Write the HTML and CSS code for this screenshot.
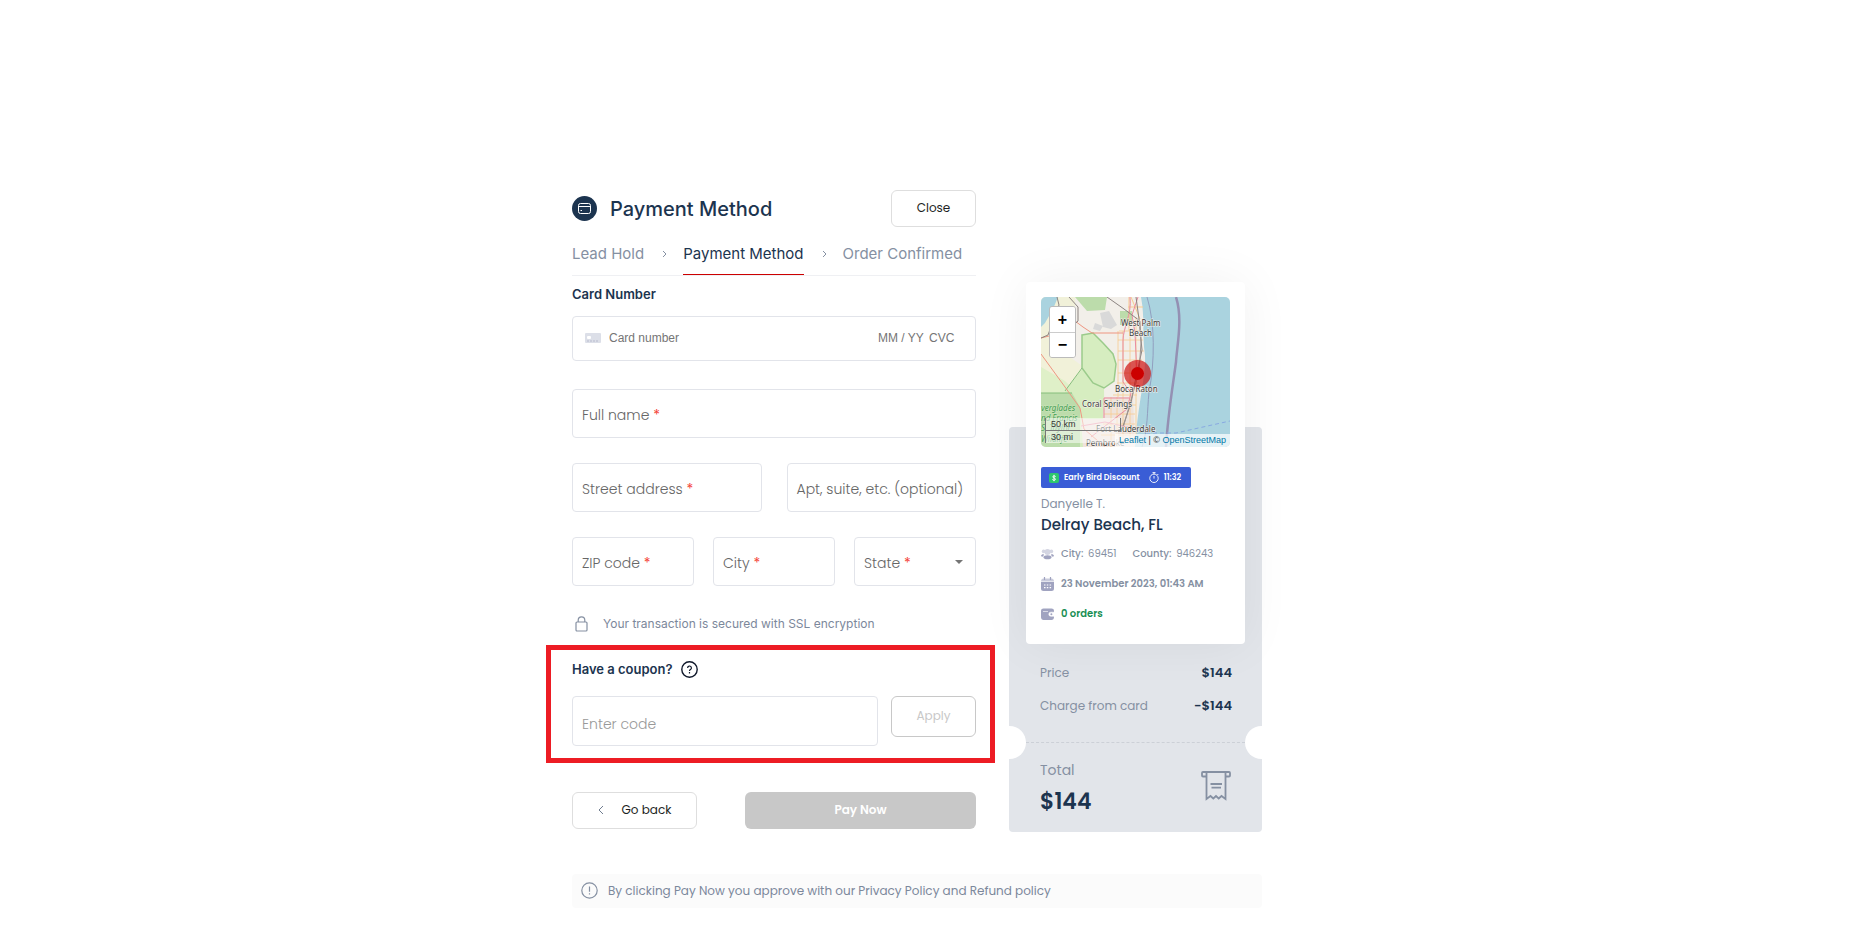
FILE: index.html
```html
<!DOCTYPE html>
<html lang="en">
<head>
  <meta charset="UTF-8">
  <meta name="viewport" content="width=device-width, initial-scale=1.0">
  <title>Payment Method</title>
  <link rel="stylesheet" href="styles.css">
</head>
<body>

<main class="checkout">
  <div class="columns">
    <form class="payment">
      <header class="payment-header">
        <svg class="title-icon" viewBox="0 0 25 25" fill="none">
          <circle cx="12.5" cy="12.5" r="12.5" fill="#1c344f"/>
          <rect x="6.5" y="7.5" width="12" height="10" rx="2" stroke="#fff"/>
          <path d="M6.5 10.5h12M8.5 14.5h1.5" stroke="#fff"/>
        </svg>
        <h1>Payment Method</h1>
        <button type="button" class="btn close-btn">Close</button>
      </header>

      <nav class="steps">
        <a href="#" class="step">Lead Hold</a>
        <svg class="step-arrow" viewBox="0 0 5 8"><path d="M1 1l3 3-3 3"/></svg>
        <a href="#" class="step active">Payment Method</a>
        <svg class="step-arrow" viewBox="0 0 5 8"><path d="M1 1l3 3-3 3"/></svg>
        <a href="#" class="step">Order Confirmed</a>
      </nav>

      <label class="section-label" for="cardNumber">Card Number</label>
      <div class="card-box">
        <svg class="card-icon" viewBox="0 0 16 10">
          <rect width="16" height="10" rx="1" fill="#dcdfe8"/>
          <rect x="2" y="3" width="4" height="3" rx="1" fill="#fff"/>
          <path d="M2 8h12" stroke="#c3c8d6" stroke-width="1.5" stroke-dasharray="2 1"/>
        </svg>
        <input type="text" id="cardNumber" class="card-number" placeholder="Card number">
        <input type="text" class="card-exp" placeholder="MM / YY" aria-label="Expiry date">
        <input type="text" class="card-cvc" placeholder="CVC" aria-label="CVC">
      </div>

      <div class="fields">
        <div class="field">
          <input type="text" id="fullName">
          <label for="fullName">Full name <span class="req">*</span></label>
        </div>
      </div>
      <div class="fields two">
        <div class="field">
          <input type="text" id="street">
          <label for="street">Street address <span class="req">*</span></label>
        </div>
        <div class="field">
          <input type="text" id="apt">
          <label for="apt">Apt, suite, etc. (optional)</label>
        </div>
      </div>
      <div class="fields three">
        <div class="field">
          <input type="text" id="zip">
          <label for="zip">ZIP code <span class="req">*</span></label>
        </div>
        <div class="field">
          <input type="text" id="city">
          <label for="city">City <span class="req">*</span></label>
        </div>
        <div class="field">
          <select id="state"><option value=""></option></select>
          <label for="state">State <span class="req">*</span></label>
          <svg class="caret" viewBox="0 0 8 4"><path d="M0 0h8L4 4z" fill="#757575"/></svg>
        </div>
      </div>

      <p class="secure">
        <svg class="lock-icon" viewBox="0 0 13 16" fill="none" stroke="#8590a2" stroke-width="1.2">
          <rect x="1" y="6" width="11" height="9" rx="1"/>
          <path d="M3.2 6V4.2a3.3 3.3 0 0 1 6.6 0V6"/>
        </svg>
        Your transaction is secured with SSL encryption
      </p>

      <section class="coupon">
        <div class="coupon-title">
          <label for="coupon">Have a coupon?</label>
          <svg class="help-icon" viewBox="0 0 17 17" fill="none" stroke="#10182b">
            <circle cx="8.5" cy="8.5" r="7.7" stroke-width="1.4"/>
            <path d="M6.6 7a1.9 1.9 0 1 1 2.8 1.6c-.7.4-.9.7-.9 1.3M8.5 11.1v1.3" stroke-width="1.2"/>
          </svg>
        </div>
        <div class="coupon-row">
          <input type="text" id="coupon" placeholder="Enter code">
          <button type="button" class="btn apply-btn" disabled>Apply</button>
        </div>
      </section>

      <div class="actions">
        <button type="button" class="btn back-btn">
          <svg class="back-arrow" viewBox="0 0 6 10"><path d="M5 1L1 5l4 4"/></svg>
          Go back
        </button>
        <button type="submit" class="btn pay-btn" disabled>Pay Now</button>
      </div>
    </form>

    <aside class="summary">
      <div class="lead-card">
        <div class="map">
          <svg class="map-tiles" viewBox="0 0 189 150" preserveAspectRatio="xMidYMid slice" fill="none">
            <rect width="189" height="150" fill="#aad3df"/>
            <path d="M0 0H100C104 20 101 38 104 58C105 80 97 105 94 150H0z" fill="#f2efe9"/>
            <path d="M0 0H34V30L26 58L40 68V150H0z" fill="#f1f1d9"/>
            <path d="M0 0H17L12 12L4 26L0 30z" fill="#aad3df"/>
            <path d="M34 0H66L64 13L46 14z" fill="#bcdcab"/>
            <path d="M79 14h12v14H79z" fill="#bcdcab"/>
            <path d="M59 16l9-2 8 14-6 4-8-2zM54 26l8 3-3 5-7-2z" fill="#d9d9d9"/>
            <path d="M0 70L24 84L36 96H0z" fill="#dff0c8"/>
            <path d="M41 38L52 36L62 46L72 57L75 67L73 84L63 91L64 150H34L24 94L41 72z" fill="#d6edc0"/>
            <path d="M41 38L52 36L62 46L72 57L75 67L73 84L63 91L52 86L41 71z" stroke="#9bcb8b" stroke-width="1.5"/>
            <path d="M0 96H31L39 110V150H0z" fill="#bcdcab"/>
            <path d="M0 96H31M24 94L41 71" stroke="#85be7c"/>
            <path d="M63 100H92L94 150H42L40 122H62z" fill="#efe3dc"/>
            <path d="M82 34v112M89 34v112M95 20v120M77 34v66M78 34h23M77 43h25M77 54h26M77 63h24M77 76h24M76 86h22M72 98h24M64 108h31M63 117h31M62 127h32M60 138h34M70 100v50M76 100v50" stroke="#f7cb90" stroke-width=".8"/>
            <path d="M87 10h15M90 0l9 22M88 0v34" stroke="#f7cb90"/>
            <path d="M89 0C91 18 82 30 82 44V85L90 96L86 112L68 126L50 140M97 0L91 18L94 36L96 80M63 121V101H88" stroke="#e88ba0"/>
            <path d="M0 57L24 90L39 111L43 132L64 150M34 24L42 30L51 36H82M12 25L34 30M0 41L8 39" stroke="#ee9580"/>
            <path d="M16 0L18 8L7 38L0 41M28 0L37 10V24L27 33M66 0L83 12L99 24M95 0L98 22L101 53L94 85L90 106L81 132" stroke="#8b8380"/>
            <path d="M99 24L100 46L98 75L88 110L82 131" stroke="#9f9692"/>
            <path d="M40 129L64 125L94 132" stroke="#ec9aae"/>
            <path d="M106 0C114 25 114 65 108 95C106 115 107 133 101 150" stroke="#919ebf"/>
            <path d="M135 0C142 22 136 48 135 65C132 88 127 116 125 150" stroke="#9490b3" stroke-width="2.5"/>
            <path d="M105 136H135L189 124" stroke="#88a9e1" stroke-dasharray="4 3"/>
            <g class="park-names">
              <text x="0" y="114">verglades</text>
              <text x="0" y="124">nd Francis</text>
              <text x="0" y="134">S. Taylor</text>
              <text x="0" y="145">Wildlife</text>
            </g>
            <g class="map-names">
              <text x="80" y="29">West Palm</text>
              <text x="88" y="39">Beach</text>
              <text x="74" y="95">Boca Raton</text>
              <text x="41" y="110">Coral Springs</text>
              <text x="55" y="135">Fort Lauderdale</text>
              <text x="45" y="149">Pembroke</text>
            </g>
            <circle cx="96.5" cy="76.5" r="13.5" fill="#cc0000" fill-opacity=".65"/>
            <circle cx="96.5" cy="76.5" r="6.5" fill="#cc0000"/>
          </svg>
          <div class="zoom-control">
            <button type="button" aria-label="Zoom in">+</button>
            <button type="button" aria-label="Zoom out">−</button>
          </div>
          <div class="scale">
            <span class="scale-km">50 km</span>
            <span class="scale-mi">30 mi</span>
          </div>
          <div class="attribution"><a href="#">Leaflet</a> | © <a href="#">OpenStreetMap</a></div>
        </div>

        <div class="discount">
          <svg class="dollar-icon" viewBox="0 0 10 10" fill="none">
            <rect width="10" height="10" rx="2" fill="#2dc76d"/>
            <path d="M6.7 3.6C6 2.6 3.7 2.7 3.7 3.9S6.5 4.8 6.5 6.2 4 7.5 3.3 6.4M5 1.8v6.4" stroke="#fff" stroke-width=".9"/>
          </svg>
          <span class="discount-name">Early Bird Discount</span>
          <svg class="timer-icon" viewBox="0 0 10 11" fill="none" stroke="#fff" stroke-width=".9">
            <circle cx="5" cy="6.3" r="4.2"/>
            <path d="M3.5 .6h3M5 .6v1.5M5 4v2.6M8.3 2l1 1"/>
          </svg>
          <span>11:32</span>
        </div>

        <p class="lead-name">Danyelle T.</p>
        <h2 class="lead-place">Delray Beach, FL</h2>

        <ul class="lead-info">
          <li>
            <svg class="info-icon" viewBox="0 0 13 14" fill="#a0a3c0">
              <g opacity=".45"><circle cx="6.5" cy="5" r="3"/><circle cx="2.6" cy="4.4" r="1.8"/><circle cx="10.4" cy="4.4" r="1.8"/></g>
              <ellipse cx="6.5" cy="10.3" rx="3.9" ry="2"/>
              <path d="M0 9.2C.2 7.5 1.2 7 3 7.2L2.2 9.8zM13 9.2c-.2-1.7-1.2-2.2-3-2l.8 2.6z"/>
            </svg>
            <span><b>City:</b> 69451</span>
            <span class="county"><b>County:</b> 946243</span>
          </li>
          <li class="date">
            <svg class="info-icon" viewBox="0 0 13 14">
              <path d="M0 5h13v6.5A2.5 2.5 0 0 1 10.5 14h-8A2.5 2.5 0 0 1 0 11.5z" fill="#a0a3c0"/>
              <path d="M0 4.5C0 2.5 1 1.5 2.5 1.5h8C12 1.5 13 2.5 13 4.5z" fill="#c9cbdc"/>
              <path d="M3.5 0v3M9.5 0v3" stroke="#a0a3c0" stroke-width="1.2"/>
              <path d="M3 8h1.5M5.8 8h1.5M8.6 8h1.5M3 10.7h1.5M5.8 10.7h1.5M8.6 10.7h1.5" stroke="#fff" stroke-width="1.2"/>
            </svg>
            <span>23 November 2023, 01:43 AM</span>
          </li>
          <li class="orders">
            <svg class="info-icon" viewBox="0 0 13 14">
              <path d="M0 4C0 2.3 1 1.5 2.5 1.5h8C12 1.5 13 2.3 13 4v6c0 1.8-1 3-2.5 3h-8C1 13 0 11.8 0 10z" fill="#a0a3c0"/>
              <path d="M13 5.2H9.8a2 2 0 0 0 0 4H13zM2 4.5h5" fill="#fff" stroke="#fff" stroke-width=".6"/>
              <circle cx="10.4" cy="7.2" r="1" fill="#a0a3c0"/>
            </svg>
            <span>0 orders</span>
          </li>
        </ul>
      </div>

      <dl class="prices">
        <div class="price-row"><dt>Price</dt><dd>$144</dd></div>
        <div class="price-row"><dt>Charge from card</dt><dd>-$144</dd></div>
      </dl>

      <div class="tear">
        <span class="notch left"></span>
        <span class="dashes"></span>
        <span class="notch right"></span>
      </div>

      <div class="total">
        <div>
          <p class="total-label">Total</p>
          <p class="total-value">$144</p>
        </div>
        <svg class="receipt-icon" viewBox="0 0 30 30" fill="none" stroke="#8590a2" stroke-width="1.8">
          <path d="M5.5 1H2a1 1 0 0 0-1 1v2.500a1 1 0 0 0 1 1h3.500M24.500 1H28a1 1 0 0 1 1 1v2.500a1 1 0 0 1-1 1h-3.500M5 1h20"/>
          <path d="M5.500 1v27l4-3 2.800 2.500L15 25l2.700 2.500 2.800-2.500 4 3V1"/>
          <path d="M9.500 13h11.500M10.500 16.700h9.500"/>
        </svg>
      </div>
    </aside>
  </div>

  <footer class="notice">
    <svg class="notice-icon" viewBox="0 0 17 17" fill="none" stroke="#8590a2">
      <circle cx="8.5" cy="8.5" r="7.7" stroke-width="1.2"/>
      <path d="M8.5 4.5v5.2M8.5 11.2v1.3" stroke-width="1.2"/>
    </svg>
    By clicking Pay Now you approve with our Privacy Policy and Refund policy
  </footer>
</main>

</body>
</html>
```
FILE: styles.css
```css
/* General Styles */
* {
  box-sizing: border-box;
}
body {
  font-family: Poppins, Inter, sans-serif;
  margin: 0;
  padding: 190px 25px 20px 0;
  background: #fff;
  color: #1c344f;
}
h1, h2, p, ul, dl, dd {
  margin: 0;
  padding: 0;
}
input, select, button {
  font-family: inherit;
}
svg {
  display: block;
  flex: none;
}
a {
  text-decoration: none;
}
.checkout {
  max-width: 690px;
  margin: 0 auto;
}
.columns {
  display: flex;
  gap: 33px;
  align-items: flex-end;
}
.payment {
  flex: 1;
  min-width: 0;
  padding-bottom: 3px;
}
.btn {
  height: 37px;
  padding: 0 0 1px;
  border: 1px solid #dedede;
  border-radius: 6px;
  background: #fff;
  color: #1d1f23;
  font-size: 12px;
  cursor: pointer;
}

/* Header */
.payment-header {
  display: flex;
  align-items: center;
}
.title-icon {
  width: 25px;
  height: 25px;
}
.payment-header h1 {
  flex: 1;
  margin-left: 13px;
  font-family: Inter, sans-serif;
  font-size: 20px;
  line-height: 24px;
  font-weight: 500;
}
.close-btn {
  width: 85px;
}

/* Steps */
.steps {
  display: flex;
  align-items: center;
  height: 49px;
  border-bottom: 1px solid #eff0f3;
  font-family: Inter, sans-serif;
}
.step {
  height: 48px;
  color: #8590a2;
  font-size: 15px;
  line-height: 54px;
  white-space: nowrap;
}
.step.active {
  color: #1c344f;
  border-bottom: 1px solid #cc0000;
}
.step-arrow {
  width: 5px;
  height: 8px;
  margin: 6px 16px 0 18px;
  fill: none;
  stroke: #8590a2;
}

/* Card */
.section-label {
  display: block;
  padding: 10px 0 14px;
  font-family: Inter, sans-serif;
  font-size: 13px;
  line-height: 16px;
  font-weight: 600;
}
.card-box {
  display: flex;
  align-items: center;
  height: 45px;
  padding: 0 20px 2px 12px;
  border: 1px solid #e2e4ea;
  border-radius: 4px;
}
.card-box input {
  padding: 0;
  border: none;
  outline: none;
  background: none;
  font: 12px "Liberation Sans", Arial, sans-serif;
}
.card-icon {
  width: 16px;
  height: 10px;
}
.card-number {
  flex: 1;
  min-width: 0;
  margin-left: 8px;
}
.card-exp {
  width: 51px;
}
.card-cvc {
  width: 26px;
}

/* Fields */
.fields {
  display: grid;
  margin-top: 25px;
}
.card-box + .fields {
  margin-top: 28px;
}
.fields.two {
  grid-template-columns: 1fr 1fr;
  gap: 25px;
}
.fields.three {
  grid-template-columns: 1fr 1fr 1fr;
  gap: 19px;
}
.field {
  display: grid;
  align-items: center;
  height: 49px;
}
.field > * {
  grid-area: 1 / 1;
}
.field input, .field select {
  width: 100%;
  height: 100%;
  padding: 4px 10px 0;
  border: 1px solid #e2e4ea;
  border-radius: 4px;
  background: #fff;
  appearance: none;
}
.field label {
  padding: 4px 0 0 10px;
  color: #666;
  font-size: 14px;
  font-weight: 300;
  white-space: nowrap;
  pointer-events: none;
}
.req {
  color: #f44336;
  font-weight: 400;
}
.caret {
  width: 8px;
  height: 4px;
  margin-right: 13px;
  justify-self: end;
  pointer-events: none;
}
.secure {
  display: flex;
  align-items: center;
  gap: 15px;
  padding: 28px 0 12px 3px;
  color: #7c889b;
  font-family: Inter, sans-serif;
  font-size: 12px;
  line-height: 19px;
}
.lock-icon {
  width: 13px;
  height: 16px;
}

/* Coupon */
.coupon {
  margin: 0 -19px 0 -26px;
  padding: 11px 14px 12px 21px;
  border: 5px solid #ed1c24;
}
.coupon-title {
  display: flex;
  align-items: center;
  gap: 8px;
  margin-bottom: 18px;
  font-family: Inter, sans-serif;
  font-size: 13px;
  line-height: 17px;
  font-weight: 600;
}
.help-icon, .notice-icon {
  width: 17px;
  height: 17px;
}
.coupon-row {
  display: flex;
  gap: 13px;
}
.coupon-row input {
  flex: 1;
  min-width: 0;
  height: 50px;
  padding: 6px 9px 0;
  border: 1px solid #e2e4ea;
  border-radius: 4px;
  font-size: 14px;
  font-weight: 300;
}
.coupon-row input::placeholder {
  color: #999;
}
.apply-btn {
  width: 85px;
  height: 41px;
  border-color: #c8c8c8;
  color: #c8c8c8;
}

/* Actions */
.actions {
  display: flex;
  justify-content: space-between;
  margin-top: 29px;
}
.back-btn {
  display: flex;
  align-items: center;
  justify-content: center;
  gap: 18px;
  width: 125px;
}
.back-arrow {
  width: 6px;
  height: 10px;
  fill: none;
  stroke: #6f7c8f;
}
.pay-btn {
  width: 231px;
  border: none;
  background: #c8c8c8;
  color: #fff;
  font-weight: 600;
}

/* Summary */
.summary {
  flex: none;
  width: 253px;
  border-radius: 4px;
  background: #e2e5ea;
}
.lead-card {
  margin: -145px 17px 0;
  padding: 15px;
  height: 362px;
  border-radius: 4px;
  background: #fff;
  box-shadow: 0 0 50px rgba(0, 0, 0, 0.06);
}
.map {
  position: relative;
  height: 150px;
  border-radius: 5px;
  overflow: hidden;
}
.map-tiles {
  width: 100%;
  height: 100%;
}
.map-names, .park-names {
  font-family: "Noto Sans", sans-serif;
  font-size: 8px;
  fill: #3b3b3b;
  stroke: #f5f1ec;
  stroke-width: 1px;
  paint-order: stroke;
}
.park-names {
  font-style: italic;
  fill: #3e9b50;
  stroke: #cfe6bd;
}
.zoom-control {
  position: absolute;
  top: 9px;
  left: 8px;
  width: 27px;
  border: 1px solid #bbb;
  border-radius: 3px;
  overflow: hidden;
}
.zoom-control button {
  display: block;
  width: 100%;
  height: 25px;
  padding: 0;
  border: none;
  background: #fff;
  color: #000;
  font: bold 16px/24px "Liberation Sans", Arial, sans-serif;
}
.zoom-control button + button {
  border-top: 1px solid #ccc;
}
.scale {
  position: absolute;
  left: 4px;
  bottom: 4px;
  color: #333;
  font: 9px/12px "Liberation Sans", Arial, sans-serif;
}
.scale span {
  display: block;
  padding-left: 5px;
  background: rgba(255, 255, 255, 0.5);
  border-left: 1px solid #777;
}
.scale-km {
  width: 76px;
  border-right: 1px solid #777;
  border-bottom: 1px solid #777;
}
.scale-mi {
  width: 73px;
}
.attribution {
  position: absolute;
  right: 0;
  bottom: 0;
  padding: 0 4px;
  background: rgba(255, 255, 255, 0.7);
  color: #333;
  font: 9px/13px "Liberation Sans", Arial, sans-serif;
}
.attribution a {
  color: #0078a8;
}
.discount {
  display: flex;
  align-items: center;
  width: 150px;
  height: 21px;
  margin-top: 20px;
  padding-left: 8px;
  border-radius: 2px;
  background: #3a5dd6;
  color: #fff;
  font-size: 8px;
  font-weight: 600;
  white-space: nowrap;
}
.dollar-icon {
  width: 10px;
  height: 10px;
  margin-right: 5px;
}
.timer-icon {
  width: 10px;
  height: 11px;
  margin: 0 5px 0 9px;
}
.lead-name {
  margin-top: 7px;
  color: #8590a2;
  font-size: 12px;
  line-height: 18px;
}
.lead-place {
  font-size: 15px;
  line-height: 24px;
  font-weight: 500;
}
.lead-info {
  margin-top: 8px;
  list-style: none;
  color: #8590a2;
  font-size: 10px;
}
.lead-info li {
  display: flex;
  align-items: center;
  height: 18px;
  margin-bottom: 12px;
}
.lead-info b {
  margin-right: 2px;
  font-weight: 500;
}
.info-icon {
  width: 13px;
  height: 14px;
  margin-right: 7px;
}
.county {
  margin-left: 16px;
}
.lead-info .date {
  font-weight: 600;
}
.lead-info .orders {
  color: #1a8f54;
  font-weight: 600;
}

/* Prices */
.prices {
  padding: 18px 30px 9px 31px;
}
.price-row {
  display: flex;
  align-items: center;
  justify-content: space-between;
  height: 22px;
  color: #8590a2;
  font-size: 12px;
}
.price-row + .price-row {
  margin-top: 11px;
}
.price-row dd {
  color: #1c344f;
  font-size: 13px;
  font-weight: 600;
}
.tear {
  display: flex;
  align-items: center;
}
.notch {
  width: 17px;
  height: 33px;
  background: #fff;
}
.notch.left {
  border-radius: 0 17px 17px 0;
}
.notch.right {
  border-radius: 17px 0 0 17px;
}
.dashes {
  flex: 1;
  border-top: 1px dashed #ccd0d7;
}
.total {
  display: flex;
  align-items: flex-start;
  justify-content: space-between;
  padding: 0 31px 10px 31px;
}
.total-label {
  color: #8590a2;
  font-size: 14px;
  line-height: 23px;
}
.total-value {
  font-size: 22px;
  line-height: 40px;
  font-weight: 600;
}
.receipt-icon {
  width: 30px;
  height: 30px;
  margin-top: 12px;
}

/* Notice */
.notice {
  display: flex;
  align-items: center;
  gap: 10px;
  height: 34px;
  margin-top: 42px;
  padding: 0 9px 1px;
  border-radius: 4px;
  background: #fbfbfb;
  color: #7c889b;
  font-size: 12px;
}
```
